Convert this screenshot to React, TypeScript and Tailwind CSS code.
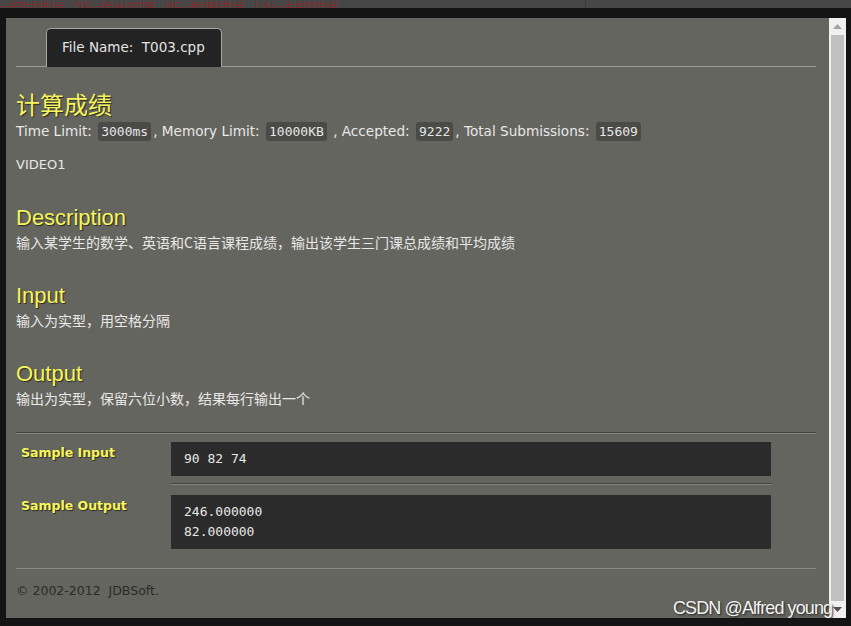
const body = { fontFamily: '"DejaVu Sans", "Noto Sans CJK SC", sans-serif' };
const cjk = { fontFamily: '"Noto Sans CJK SC", "Liberation Sans", sans-serif' };
const heading = { fontFamily: '"Liberation Sans", "Noto Sans CJK SC", sans-serif' };
const mono = { fontFamily: '"DejaVu Sans Mono", "Liberation Mono", monospace' };

function Badge({ children }: { children: React.ReactNode }) {
  return (
    <code style={mono} className="mx-[2px] rounded-[3px] bg-[#4a4a46] px-[3px] py-[2px] text-[13px] text-[#e6e6e6]">
      {children}
    </code>
  );
}

function Section({ title, text, first }: { title: string; text: string; first?: boolean }) {
  return (
    <div className={first ? 'mt-[29px]' : 'mt-[30px]'}>
      <h2 style={heading} className="text-[22px] leading-[28px] text-[#f6f65c] [text-shadow:1px_1px_1px_#2a2a26]">
        {title}
      </h2>
      <p style={cjk} className="text-[14px] leading-[20px] text-[#e8e8e8]">
        {text}
      </p>
    </div>
  );
}

function Sample({ label, lines }: { label: string; lines: string[] }) {
  return (
    <div className="flex">
      <div
        style={body}
        className="w-[155px] shrink-0 pl-[5px] pt-[2px] text-[12.5px] font-bold text-[#f6f65c] [text-shadow:1px_1px_1px_#2a2a26]"
      >
        {label}
      </div>
      <pre style={mono} className="w-[600px] bg-[#2b2b2b] px-[13px] py-[7px] text-[13px] leading-[20px] text-[#e8e8e8]">
        {lines.join('\n')}
      </pre>
    </div>
  );
}

export default function App() {
  return (
    <div className="relative flex h-[626px] w-[851px] flex-col overflow-hidden bg-[#141414]">
      {/* top strip, cut off by the dialog */}
      <div className="relative h-[8px] shrink-0 overflow-hidden bg-[#474747]">
        <div style={cjk} className="-mt-[1px] flex gap-[9px] whitespace-pre text-[14px] leading-[16px] text-[#7d2d2d]">
          <span>=超时错误</span>
          <span>OE=输出超限</span>
          <span>PE=数据错误</span>
          <span>UN=未知错误</span>
        </div>
        <div className="absolute left-[585px] top-0 h-full w-px bg-[#3c3c3c]" />
      </div>

      <div className="flex h-[600px] box-content pt-[10px]">
        <div className="w-[6px] shrink-0" />

        <div className="flex w-[823px] flex-col bg-[#65655f] pl-[10px] pr-[13px]">
          {/* tab */}
          <div className="h-[10px] shrink-0" />
          <div className="flex border-b border-[#9a9a94]">
            <div
              style={body}
              className="-mb-px ml-[30px] h-[39px] w-[176px] rounded-t-[5px] border border-b-0 border-[#a6a6a0] bg-[#232323] pl-[15px] pt-[8px] text-[13.5px] text-[#e4e4e4]"
            >
              File Name:&nbsp; T003.cpp
            </div>
          </div>

          <h1 style={cjk} className="mt-[23px] text-[24px] leading-[28px] text-[#f6f65c] [text-shadow:1px_1px_1px_#2a2a26]">
            计算成绩
          </h1>
          <div style={body} className="mt-[3px] text-[13.6px] leading-[20px] text-[#e8e8e8]">
            Time Limit: <Badge>3000ms</Badge>, Memory Limit: <Badge>10000KB</Badge> , Accepted: <Badge>9222</Badge>, Total
            Submissions: <Badge>15609</Badge>
          </div>
          <div style={body} className="mt-[13px] text-[13px] leading-[20px] text-[#e8e8e8]">
            VIDEO1
          </div>

          <Section first title="Description" text="输入某学生的数学、英语和C语言课程成绩，输出该学生三门课总成绩和平均成绩" />
          <Section title="Input" text="输入为实型，用空格分隔" />
          <Section title="Output" text="输出为实型，保留六位小数，结果每行输出一个" />

          <div className="mt-[24px] border-t border-b border-t-[#44443f] border-b-[#85857f]" />
          <div className="mt-[8px]">
            <Sample label="Sample Input" lines={['90 82 74']} />
          </div>
          <div className="ml-[155px] mt-[7px] w-[600px] border-t border-b border-t-[#44443f] border-b-[#85857f]" />
          <div className="mt-[10px]">
            <Sample label="Sample Output" lines={['246.000000', '82.000000']} />
          </div>

          <div className="mt-[19px] border-t border-[#88887f]" />
          <div style={body} className="mt-[13px] text-[12.5px] text-[#2a2a28]">
            ©&nbsp;2002-2012&nbsp;&nbsp;JDBSoft.
          </div>
        </div>

        {/* scrollbar */}
        <div className="flex w-[17px] shrink-0 flex-col items-center bg-[#f0f0f0]">
          <div className="flex h-[17px] w-full items-center justify-center">
            <svg width="9" height="5" viewBox="0 0 9 5">
              <path d="M4.5 0 L9 5 L0 5 Z" fill="#a3a3a3" />
            </svg>
          </div>
          <div className="w-[13px] flex-1 bg-[#c1c1c1]" />
          <div className="flex h-[17px] w-full items-center justify-center">
            <svg width="9" height="5" viewBox="0 0 9 5">
              <path d="M0 0 L9 0 L4.5 5 Z" fill="#505050" />
            </svg>
          </div>
        </div>
        <div className="w-[5px] shrink-0" />
      </div>

      {/* watermark */}
      <span
        style={heading}
        className="absolute left-[673px] top-[595px] text-[18px] tracking-[-0.9px] text-[#f2f2f2] [text-shadow:1px_1px_2px_#222]"
      >
        CSDN @Alfred young
      </span>
    </div>
  );
}
